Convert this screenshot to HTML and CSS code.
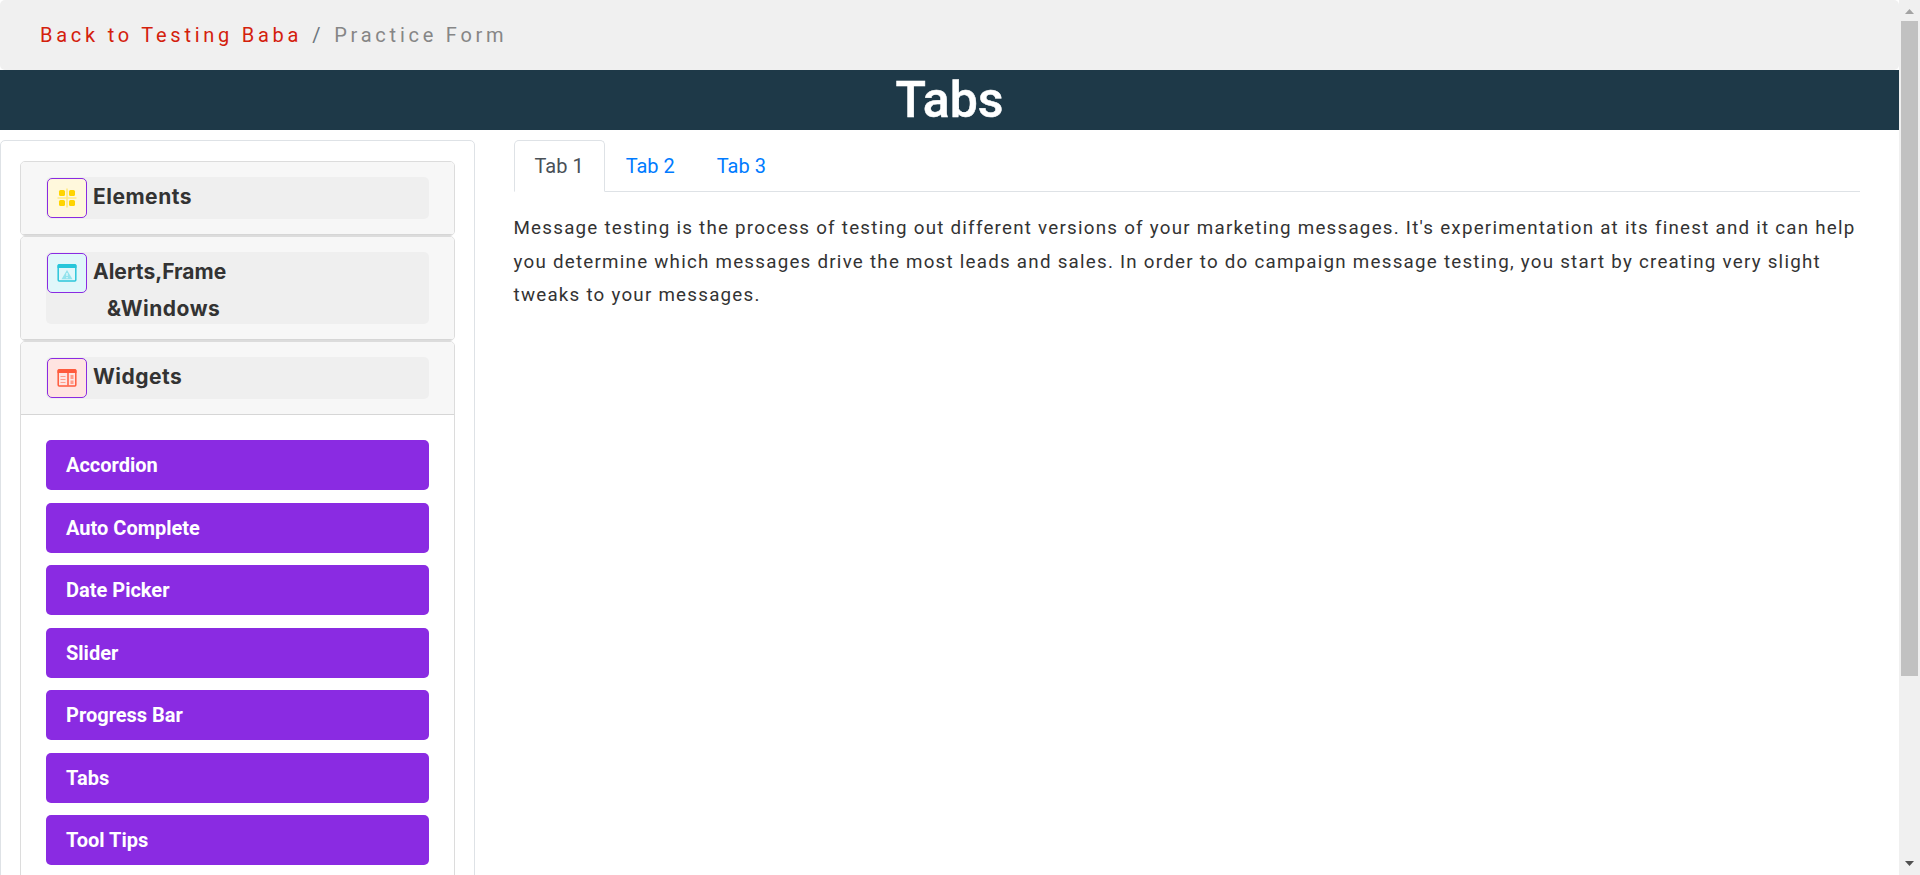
FILE: index.html
```html
<!DOCTYPE html>
<html lang="en">
<head>
<meta charset="utf-8">
<title>Tabs</title>
<link rel="stylesheet" href="styles.css">
</head>
<body>
<div class="window">
  <div class="page">
    <nav class="breadcrumb"><a class="back">Back to Testing Baba</a><span class="sep">/</span><span class="current">Practice Form</span></nav>
    <h1 class="title">Tabs</h1>
    <div class="columns">
      <aside class="sidebar">
        <section class="card">
          <div class="card-header"><button class="toggle">
            <span class="icon yellow"><svg viewBox="0 0 38 38"><path d="M9.500 19h19M19 9.500v19" stroke="#ffe985" stroke-width="1.7"/><g fill="#ffd400"><rect x="11" y="11" width="6" height="6" rx="1.500"/><rect x="21" y="11" width="6" height="6" rx="1.500"/><rect x="11" y="21" width="6" height="6" rx="1.500"/><rect x="21" y="21" width="6" height="6" rx="1.500"/></g></svg></span>
            <span class="label">Elements</span></button></div>
        </section>
        <section class="card">
          <div class="card-header"><button class="toggle tall">
            <span class="icon cyan"><svg viewBox="0 0 38 38"><rect x="10.200" y="11" width="17.600" height="16" rx="1" fill="none" stroke="#2bc6da" stroke-width="1.500"/><path d="M9.500 11.500q0-1.500 1.500-1.500h16q1.500 0 1.500 1.500v2.500h-19z" fill="#26c6da"/><path d="M19 16l5.500 9.300h-11z" fill="#93e3ed"/><path d="M19 19v3M19 23v1.200" stroke="#e0f7fa" stroke-width="1.400"/></svg></span>
            <span class="label"><span class="tight">Alerts,Frame</span><br><span class="second">&amp;Windows</span></span></button></div>
        </section>
        <section class="card open">
          <div class="card-header"><button class="toggle">
            <span class="icon red"><svg viewBox="0 0 38 38"><rect x="10.200" y="11" width="17.600" height="16" rx="1" fill="none" stroke="#ff5a3c" stroke-width="1.500"/><path d="M9.500 11.500q0-1.500 1.500-1.500h16q1.500 0 1.500 1.500v2.500h-19z" fill="#ff5a3c"/><path d="M20 14v12.500" stroke="#ff5a3c" stroke-width="1.500"/><path d="M12.500 17.500h5M12.500 20.500h5M12.500 23.500h5" stroke="#ff9c8a" stroke-width="1.200"/><path d="M22.500 16h3v4h-3zM22.500 21.500h3v3.500h-3z" fill="#ff9c8a"/></svg></span>
            <span class="label">Widgets</span></button></div>
          <div class="items">
            <a class="item">Accordion</a>
            <a class="item">Auto Complete</a>
            <a class="item">Date Picker</a>
            <a class="item">Slider</a>
            <a class="item">Progress Bar</a>
            <a class="item">Tabs</a>
            <a class="item">Tool Tips</a>
          </div>
        </section>
      </aside>
      <main class="content">
        <div class="tabs"><a class="tab active">Tab 1</a><a class="tab">Tab 2</a><a class="tab">Tab 3</a></div>
        <p class="text">Message testing is the process of testing out different versions of your marketing messages. It's experimentation at its finest and it can help you determine which messages drive the most leads and sales. In order to do campaign message testing, you start by creating very slight tweaks to your messages.</p>
      </main>
    </div>
  </div>
  <div class="scrollbar">
    <svg class="arrow" viewBox="0 0 21 21"><path d="M6 14l4.500-5 4.500 5z" fill="#a3a3a3"/></svg>
    <div class="thumb"></div>
    <svg class="arrow down" viewBox="0 0 21 21"><path d="M6 7l4.500 5 4.500-5z" fill="#505050"/></svg>
  </div>
</div>
</body>
</html>
```
FILE: styles.css
```css
* { box-sizing: border-box; }
body { margin: 0; overflow: hidden; background: #fff; font: 20px/30px Roboto, sans-serif; color: #333; }
.window { display: flex; height: 875px; overflow: hidden; }
.page { flex: 1; min-width: 0; height: 875px; overflow: hidden; }
.breadcrumb { height: 70px; padding: 20px 40px; background: #f0f0f0; border-radius: 5px; letter-spacing: 3.75px; white-space: nowrap; }
.back { color: #d4200c; }
.sep { color: #6c757d; margin: 0 10px; }
.current { color: #868686; }
.title { margin: 0; height: 60px; background: #1e3948; color: #fff; font-size: 50px; line-height: 60px; font-weight: 500; text-align: center; -webkit-text-stroke: 0.5px #fff; }
.columns { display: flex; gap: 38.5px; padding-top: 10px; align-items: flex-start; }
.sidebar { width: 475px; flex: none; border: 1px solid #dee2e6; border-radius: 5px; padding: 20px 19px 60px; }
.card { border: 1px solid #dcdcdc; border-radius: 5px; overflow: hidden; }
.card-header { background: #f7f7f7; padding: 15px 25px; border-bottom: 1px solid #d6d6d6; }
.toggle { display: flex; width: 100%; height: 42px; margin: 0; border: 0; border-radius: 5px; padding: 1px; gap: 6px; background: #efefef; color: #333; text-align: left; font: 700 21px/37px Inter, sans-serif; letter-spacing: 0.5px; }
.toggle.tall { height: 72px; }
.label { line-height: 37px; white-space: nowrap; }
.tight { letter-spacing: 0; }
.icon { width: 40px; height: 40px; flex: none; border: 1px solid #8a2be2; border-radius: 5px; }
.icon svg { display: block; width: 38px; height: 38px; }
.yellow { background: #fff8dc; }
.cyan { background: #e0f7fa; }
.red { background: #ffe4e1; }
.second { margin-left: 14px; }
.items { display: grid; gap: 12.5px; padding: 25px; }
.item { height: 50px; padding: 10px 20px; background: #8a2be2; border-radius: 5px; color: #fff; font-weight: 700; }
.content { flex: 1; min-width: 0; padding-right: 39px; }
.tabs { display: flex; height: 52px; border-bottom: 1px solid #dee2e6; }
.tab { height: 52px; padding: 10px 20px; border: 1px solid transparent; color: #007bff; }
.tab.active { color: #495057; background: #fff; border-color: #dee2e6 #dee2e6 #fff; border-radius: 5px 5px 0 0; }
.text { margin: 20px 0 0; font-size: 18.75px; line-height: 33.5px; letter-spacing: 1.245px; }
.scrollbar { width: 21px; flex: none; height: 875px; background: #f0f0f0; display: flex; flex-direction: column; }
.arrow { width: 21px; height: 21px; display: block; }
.thumb { height: 655px; margin: 0 2px; background: #c1c1c1; }
.down { margin-top: auto; }
```
